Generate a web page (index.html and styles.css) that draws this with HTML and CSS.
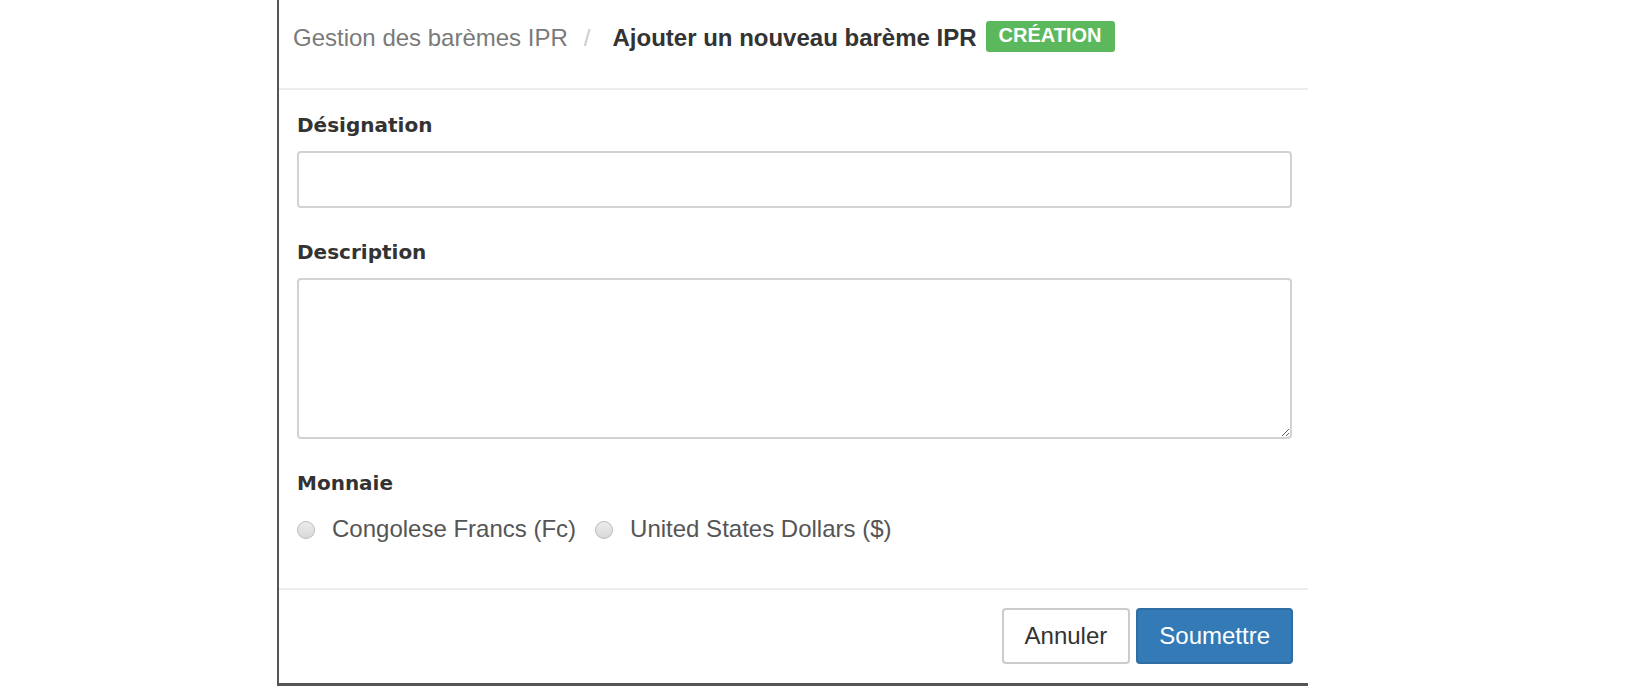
FILE: index.html
```html
<!DOCTYPE html>
<html lang="fr">
<head>
<meta charset="utf-8">
<title>Ajouter un nouveau barème IPR</title>
<link rel="stylesheet" href="styles.css">
</head>
<body>
<div class="modal">
  <div class="modal-header">
    <ol class="breadcrumb">
      <li class="crumb">Gestion des barèmes IPR</li>
      <li class="sep">/</li>
      <li class="crumb active">Ajouter un nouveau barème IPR<span class="badge">CRÉATION</span></li>
    </ol>
  </div>
  <div class="modal-body">
    <div class="group">
      <label class="field-label" for="designation">Désignation</label>
      <input class="control" id="designation" type="text">
    </div>
    <div class="group">
      <label class="field-label" for="description">Description</label>
      <textarea class="control area" id="description"></textarea>
    </div>
    <div class="group">
      <div class="field-label">Monnaie</div>
      <div class="radios">
        <label class="radio"><input type="radio" name="monnaie"><span>Congolese Francs (Fc)</span></label>
        <label class="radio"><input type="radio" name="monnaie"><span>United States Dollars ($)</span></label>
      </div>
    </div>
  </div>
  <div class="modal-footer">
    <button class="btn btn-default" type="button">Annuler</button>
    <button class="btn btn-primary" type="button">Soumettre</button>
  </div>
</div>
</body>
</html>
```
FILE: styles.css
```css
html, body {
  margin: 0;
  padding: 0;
  background: #fff;
}

body {
  font-family: "Liberation Sans", Arial, sans-serif;
  color: #333;
}

.modal {
  box-sizing: border-box;
  width: 1031px;
  margin-left: 277px;
  border-left: 2px solid #555;
  border-bottom: 3px solid #555;
  background: #fff;
}

.modal-header {
  box-sizing: border-box;
  height: 90px;
  padding: 21px 16px 0 14px;
  border-bottom: 2px solid #ececec;
}

.breadcrumb {
  display: flex;
  align-items: baseline;
  margin: 0;
  padding: 0;
  list-style: none;
  font-size: 24px;
  line-height: 34px;
}

.crumb {
  color: #7a7a7a;
}

.crumb.active {
  color: #333;
  font-weight: bold;
}

.sep {
  color: #ccc;
  margin: 0 22px 0 16px;
}

.badge {
  display: inline-block;
  margin-left: 9px;
  padding: 4px 13px 7px;
  background: #5cb85c;
  color: #fff;
  font-size: 20px;
  font-weight: bold;
  line-height: 20px;
  border-radius: 3px;
  vertical-align: 4px;
}

.modal-body {
  padding: 21px 16px 42px 18px;
}

.group + .group {
  margin-top: 30px;
}

.field-label {
  display: block;
  margin-bottom: 12px;
  font-family: "DejaVu Sans", Verdana, sans-serif;
  font-weight: bold;
  font-size: 20px;
  line-height: 28px;
  color: #333;
}

.control {
  display: block;
  box-sizing: border-box;
  width: 100%;
  height: 57px;
  margin: 0;
  padding: 8px 14px;
  border: 2px solid #d2d2d2;
  border-radius: 4px;
  background: #fff;
  font-family: "Liberation Sans", Arial, sans-serif;
  font-size: 24px;
  color: #555;
  outline: none;
}

.area {
  height: 161px;
  resize: vertical;
}

.radios {
  display: flex;
  align-items: center;
  gap: 19px;
  padding-top: 3px;
  font-size: 24px;
  line-height: 34px;
  color: #555;
}

.radio {
  display: flex;
  align-items: center;
  gap: 17px;
}

.radio input {
  appearance: none;
  -webkit-appearance: none;
  box-sizing: border-box;
  width: 18px;
  height: 18px;
  margin: 2px 0 0 0;
  border: 1px solid #bcbcbc;
  border-radius: 50%;
  background: linear-gradient(#ececec, #d8d8d8);
}

.modal-footer {
  display: flex;
  justify-content: flex-end;
  gap: 6px;
  padding: 18px 15px 19px;
  border-top: 2px solid #ececec;
}

.btn {
  box-sizing: border-box;
  height: 56px;
  margin: 0;
  padding: 0 21px;
  font-family: "Liberation Sans", Arial, sans-serif;
  font-size: 24px;
  border-radius: 4px;
  border: 2px solid transparent;
  cursor: pointer;
}

.btn-default {
  background: #fff;
  border-color: #ccc;
  color: #333;
}

.btn-primary {
  background: #337ab7;
  border-color: #2e6da4;
  color: #fff;
}
```
